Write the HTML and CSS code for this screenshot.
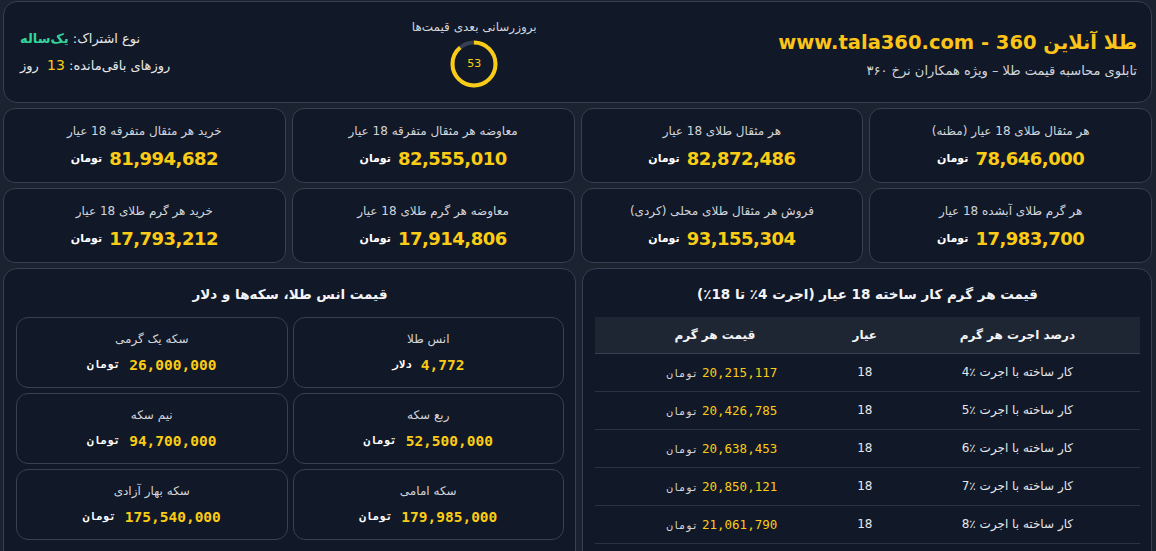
FILE: index.html
```html
<!DOCTYPE html>
<html lang="fa" dir="rtl">
<head>
<meta charset="utf-8">
<title>طلا آنلاین 360</title>
<link rel="stylesheet" href="styles.css">
</head>
<body>
<header class="header">
  <div class="brand">
    <h1 class="brand-title">طلا آنلاین <span dir="ltr" class="latin">www.tala360.com - 360</span></h1>
    <p class="brand-sub">تابلوی محاسبه قیمت طلا – ویژه همکاران نرخ ۳۶۰</p>
  </div>
  <div class="countdown">
    <div class="countdown-label">بروزرسانی بعدی قیمت‌ها</div>
    <div class="ring">
      <svg width="48" height="48" viewBox="0 0 48 48">
        <circle cx="24" cy="24" r="21.5" fill="none" stroke="#374151" stroke-width="4"/>
        <circle cx="24" cy="24" r="21.5" fill="none" stroke="#facc15" stroke-width="4" stroke-dasharray="119.3 135.1" transform="rotate(-90 24 24)"/>
      </svg>
      <span class="ring-num">53</span>
    </div>
  </div>
  <div class="account">
    <div class="acc-line">نوع اشتراک: <b class="green">یک‌ساله</b></div>
    <div class="acc-line">روزهای باقی‌مانده: <span class="yellow">13</span>&nbsp; روز</div>
  </div>
</header>

<section class="stats">
  <div class="card"><div class="card-label">هر مثقال طلای 18 عیار (مظنه)</div><div class="card-value"><span class="num" dir="ltr">78,646,000</span><span class="unit">تومان</span></div></div>
  <div class="card"><div class="card-label">هر مثقال طلای 18 عیار</div><div class="card-value"><span class="num" dir="ltr">82,872,486</span><span class="unit">تومان</span></div></div>
  <div class="card"><div class="card-label">معاوضه هر مثقال متفرقه 18 عیار</div><div class="card-value"><span class="num" dir="ltr">82,555,010</span><span class="unit">تومان</span></div></div>
  <div class="card"><div class="card-label">خرید هر مثقال متفرقه 18 عیار</div><div class="card-value"><span class="num" dir="ltr">81,994,682</span><span class="unit">تومان</span></div></div>
  <div class="card"><div class="card-label">هر گرم طلای آبشده 18 عیار</div><div class="card-value"><span class="num" dir="ltr">17,983,700</span><span class="unit">تومان</span></div></div>
  <div class="card"><div class="card-label">فروش هر مثقال طلای محلی (کردی)</div><div class="card-value"><span class="num" dir="ltr">93,155,304</span><span class="unit">تومان</span></div></div>
  <div class="card"><div class="card-label">معاوضه هر گرم طلای 18 عیار</div><div class="card-value"><span class="num" dir="ltr">17,914,806</span><span class="unit">تومان</span></div></div>
  <div class="card"><div class="card-label">خرید هر گرم طلای 18 عیار</div><div class="card-value"><span class="num" dir="ltr">17,793,212</span><span class="unit">تومان</span></div></div>
</section>

<section class="panels">
  <div class="panel">
    <h2 class="panel-title">قیمت هر گرم کار ساخته 18 عیار (اجرت 4٪ تا 18٪)</h2>
    <table class="wage">
      <thead>
        <tr><th class="c1">درصد اجرت هر گرم</th><th class="c2">عیار</th><th class="c3">قیمت هر گرم</th></tr>
      </thead>
      <tbody>
        <tr><td>کار ساخته با اجرت ٪4</td><td>18</td><td><span class="mono-num" dir="ltr">20,215,117</span> <span class="mono-unit">تومان</span></td></tr>
        <tr><td>کار ساخته با اجرت ٪5</td><td>18</td><td><span class="mono-num" dir="ltr">20,426,785</span> <span class="mono-unit">تومان</span></td></tr>
        <tr><td>کار ساخته با اجرت ٪6</td><td>18</td><td><span class="mono-num" dir="ltr">20,638,453</span> <span class="mono-unit">تومان</span></td></tr>
        <tr><td>کار ساخته با اجرت ٪7</td><td>18</td><td><span class="mono-num" dir="ltr">20,850,121</span> <span class="mono-unit">تومان</span></td></tr>
        <tr><td>کار ساخته با اجرت ٪8</td><td>18</td><td><span class="mono-num" dir="ltr">21,061,790</span> <span class="mono-unit">تومان</span></td></tr>
      </tbody>
    </table>
  </div>
  <div class="panel">
    <h2 class="panel-title">قیمت انس طلا، سکه‌ها و دلار</h2>
    <div class="coins">
      <div class="coin"><div class="coin-label">انس طلا</div><div class="coin-value"><span class="coin-num" dir="ltr">4,772</span><span class="coin-unit">دلار</span></div></div>
      <div class="coin"><div class="coin-label">سکه یک گرمی</div><div class="coin-value"><span class="coin-num" dir="ltr">26,000,000</span><span class="coin-unit">تومان</span></div></div>
      <div class="coin"><div class="coin-label">ربع سکه</div><div class="coin-value"><span class="coin-num" dir="ltr">52,500,000</span><span class="coin-unit">تومان</span></div></div>
      <div class="coin"><div class="coin-label">نیم سکه</div><div class="coin-value"><span class="coin-num" dir="ltr">94,700,000</span><span class="coin-unit">تومان</span></div></div>
      <div class="coin"><div class="coin-label">سکه امامی</div><div class="coin-value"><span class="coin-num" dir="ltr">179,985,000</span><span class="coin-unit">تومان</span></div></div>
      <div class="coin"><div class="coin-label">سکه بهار آزادی</div><div class="coin-value"><span class="coin-num" dir="ltr">175,540,000</span><span class="coin-unit">تومان</span></div></div>
    </div>
  </div>
</section>
</body>
</html>
```

FILE: styles.css
```css
* { box-sizing: border-box; margin: 0; padding: 0; }

html, body { background: #1b2230; }

body {
  direction: rtl;
  font-family: "DejaVu Sans", sans-serif;
  color: #e5e7eb;
  padding: 1px 4px 0 3px;
}

/* ---------- header ---------- */
.header {
  display: flex;
  justify-content: space-between;
  align-items: center;
  height: 102px;
  padding: 0 14px 0 16px;
  background: #111827;
  border: 1px solid #364152;
  border-radius: 14px;
}

.brand { padding-top: 5px; }

.brand-title {
  font-size: 19.5px;
  font-weight: bold;
  color: #fcc419;
  line-height: 28px;
  white-space: nowrap;
}

.brand-sub {
  margin-top: 5px;
  font-size: 13px;
  color: #d1d5db;
  line-height: 18px;
}

.countdown {
  display: flex;
  flex-direction: column;
  align-items: center;
  gap: 5px;
  padding-top: 2px;
}

.countdown-label {
  font-size: 12px;
  color: #d1d5db;
  line-height: 16px;
}

.ring {
  position: relative;
  width: 48px;
  height: 48px;
}

.ring svg { display: block; }

.ring-num {
  position: absolute;
  inset: 0;
  display: flex;
  align-items: center;
  justify-content: center;
  font-size: 11px;
  color: #facc15;
}

.account {
  display: flex;
  flex-direction: column;
  align-items: flex-end;
  gap: 8px;
  font-size: 13px;
  color: #e5e7eb;
  line-height: 18px;
}

.green { color: #34d399; }
.yellow { color: #facc15; font-size: 14px; }

/* ---------- stat cards ---------- */
.stats {
  display: grid;
  grid-template-columns: repeat(4, 1fr);
  gap: 5px 6px;
  margin-top: 5px;
}

.card {
  height: 75px;
  background: #111827;
  border: 1px solid #364152;
  border-radius: 12px;
  display: flex;
  flex-direction: column;
  align-items: center;
  justify-content: center;
  gap: 7px;
  padding-top: 2px;
}

.card-label {
  font-size: 12px;
  color: #d1d5db;
  line-height: 17px;
}

.card-value {
  display: flex;
  align-items: center;
  gap: 7px;
}

.num {
  font-size: 18px;
  font-weight: bold;
  color: #facc15;
  letter-spacing: -0.5px;
  line-height: 24px;
}

.unit {
  font-size: 11px;
  font-weight: bold;
  color: #ffffff;
}

/* ---------- lower panels ---------- */
.panels {
  display: grid;
  grid-template-columns: 570px 1fr;
  gap: 6px;
  margin-top: 5px;
}

.panel {
  background: #111827;
  border: 1px solid #364152;
  border-radius: 14px;
  padding: 14px 11px 12px 12px;
  height: 320px;
}

.panel-title {
  text-align: center;
  font-size: 13.5px;
  font-weight: bold;
  color: #f3f4f6;
  line-height: 22px;
  margin-bottom: 12px;
}

/* table */
.wage {
  width: 100%;
  border-collapse: collapse;
  table-layout: fixed;
}

.wage th {
  background: #1e2634;
  height: 36px;
  font-size: 12px;
  font-weight: bold;
  color: #f3f4f6;
  text-align: center;
  border-bottom: 1px solid #364152;
}

.wage .c1 { width: 45%; }
.wage .c2 { width: 11%; }
.wage .c3 { width: 44%; }

.wage td {
  height: 38px;
  text-align: center;
  font-size: 12px;
  color: #e5e7eb;
  border-bottom: 1px solid #2a3343;
}

.wage td:last-child { padding-left: 14px; }

.mono-num {
  font-family: "DejaVu Sans Mono", monospace;
  font-size: 12.5px;
  color: #facc15;
}

.mono-unit {
  font-family: "DejaVu Sans Mono", monospace;
  font-size: 10.5px;
  color: #d1d5db;
  letter-spacing: 1px;
}

/* coins */
.coins {
  display: grid;
  grid-template-columns: 1fr 1fr;
  gap: 5px;
}

.coin {
  height: 71px;
  border: 1px solid #364152;
  border-radius: 12px;
  background: #111827;
  display: flex;
  flex-direction: column;
  align-items: center;
  justify-content: center;
  gap: 7px;
}

.coin-label {
  font-size: 12px;
  color: #d1d5db;
  line-height: 17px;
}

.coin-value {
  display: flex;
  align-items: center;
  gap: 9px;
}

.coin-num {
  font-family: "DejaVu Sans Mono", monospace;
  font-size: 14.5px;
  font-weight: bold;
  color: #facc15;
  line-height: 20px;
}

.coin-unit {
  font-family: "DejaVu Sans Mono", monospace;
  font-size: 11px;
  font-weight: bold;
  color: #ffffff;
  letter-spacing: 1px;
}
```
